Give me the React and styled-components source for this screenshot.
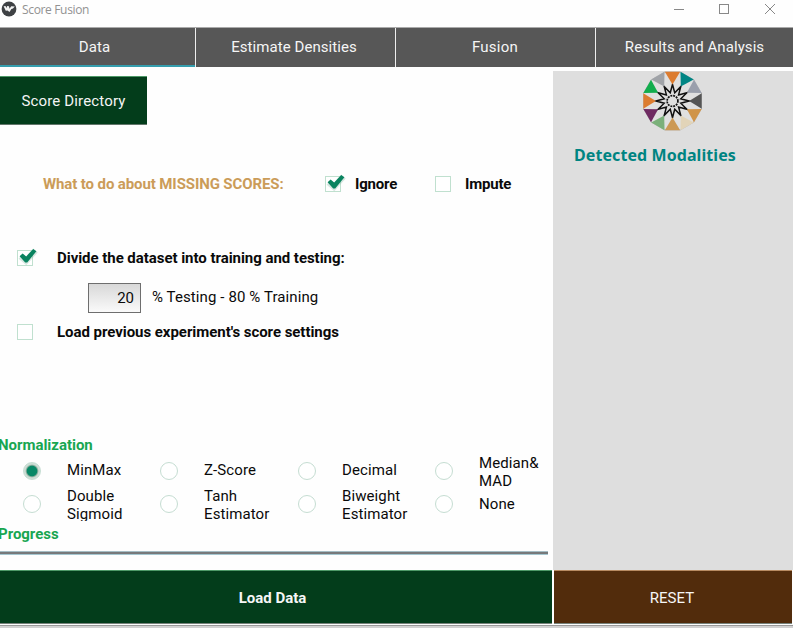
import React from "react";
import styled, { createGlobalStyle } from "styled-components";

const GlobalStyle = createGlobalStyle`
  * { box-sizing: border-box; }
  body {
    margin: 0;
    background: #fff;
    font-family: Roboto, sans-serif;
    font-size: 15px;
    line-height: 18px;
    color: #0a0a0a;
  }
`;

const Window = styled.div`
  width: 793px;
  height: 628px;
  overflow: hidden;
  display: flex;
  flex-direction: column;
  background: #fefefe;
`;

const TitleBar = styled.header`
  height: 27px;
  flex: none;
  display: flex;
  align-items: flex-start;
  justify-content: space-between;
`;

const AppTitle = styled.div`
  display: flex;
  gap: 5px;
  padding: 1px 0 0 1px;
  font: 12px/18px "Open Sans", sans-serif;
  letter-spacing: -0.34px;
  color: #929292;
`;

const WindowControls = styled.div`
  display: flex;
  gap: 35px;
  padding: 4px 18px 0 0;
`;

const Tabs = styled.nav`
  height: 40px;
  flex: none;
  display: grid;
  grid-template-columns: 195px 199px 199px 197px;
  column-gap: 1px;
  border-top: 1px solid #aaa;
  background: #eee;
`;

const Tab = styled.button`
  border: 0;
  padding: 0 ${(p) => p.$inset || 0}px 1px 0;
  background: #575757;
  box-shadow: ${(p) => (p.$active ? "inset 0 -2px #349dad" : "none")};
  color: #f5f5f5;
  font: 15px/18px Roboto, sans-serif;
  letter-spacing: ${(p) => p.$spacing || 0.07}px;
`;

const Body = styled.div`
  display: flex;
  height: 503px;
  flex: none;
`;

const Form = styled.main`
  width: 553px;
  flex: none;
  display: flex;
  flex-direction: column;
  align-items: flex-start;
`;

const DirectoryButton = styled.button`
  width: 147px;
  height: 49px;
  margin-top: 9px;
  padding: 0;
  border: 0;
  border-top: 1px solid #4d9967;
  border-bottom: 1px solid #62756a;
  background: #033d1b;
  color: #f4f4f4;
  font: 15px/18px Roboto, sans-serif;
  letter-spacing: 0.15px;
`;

const MissingRow = styled.div`
  display: grid;
  grid-template-columns: 282px 30px 80px 30px auto;
  align-items: center;
  height: 20px;
  margin: 49px 0 0 43px;
`;

const OptionRow = styled.div`
  display: grid;
  grid-template-columns: 40px auto;
  align-items: center;
  height: 20px;
  margin: ${(p) => p.$top}px 0 0 17px;
`;

const Label = styled.span`
  font-weight: 700;
  white-space: nowrap;
  color: ${(p) => p.$color || "#0a0a0a"};
  letter-spacing: ${(p) => p.$spacing || -0.045}px;
`;

const CheckIcon = styled.svg`
  display: block;
  width: 24px;
  height: 20px;
  overflow: visible;
`;

const SplitRow = styled.div`
  display: flex;
  gap: 11px;
  height: 30px;
  margin: 15px 0 0 88px;
  line-height: 28px;
`;

const PercentInput = styled.input`
  width: 53px;
  height: 30px;
  padding: 0 6px 0 0;
  border: 1px solid #6e6e6e;
  border-radius: 0;
  outline: 0;
  background: linear-gradient(#d8d8d8, #fafafa);
  text-align: right;
  color: #0a0a0a;
  font: 15px/28px Roboto, sans-serif;
`;

const SplitText = styled.span`
  letter-spacing: 0.1px;
`;

const SectionTitle = styled.h2`
  margin: ${(p) => p.$top}px 0 0 -2px;
  font-size: 15px;
  line-height: 18px;
  font-weight: 700;
  color: #18a651;
  letter-spacing: -0.03px;
`;

const Methods = styled.div`
  display: grid;
  grid-template-columns: 137px 138px 137px 118px;
  grid-template-rows: 33px 33px;
  height: 67px;
  margin: 0 0 0 23px;
`;

const Method = styled.label`
  display: grid;
  grid-template-columns: 44px auto;
  align-items: center;
  justify-content: start;
  letter-spacing: 0.1px;
  white-space: pre-line;
`;

const MethodName = styled.span`
  max-height: 34px;
  overflow: ${(p) => (p.$clipped ? "hidden" : "visible")};
  padding-bottom: ${(p) => (p.$raised ? 2 : 0)}px;
`;

const Radio = styled.input`
  appearance: none;
  width: 18px;
  height: 18px;
  margin: 0;
  border: 1px solid #c5ddd2;
  border-radius: 50%;
  background: #fff;

  &:checked {
    background: radial-gradient(circle, #078866 0 4.8px, #8daf9f 5.8px, #cfded6 6.8px);
  }
`;

const ProgressBar = styled.div`
  width: 548px;
  height: 4px;
  margin-top: 8px;
  border-top: 1px solid #a5bdc5;
  border-bottom: 1px solid #a5c7d1;
  background: #77797b;
`;

const Modalities = styled.aside`
  flex: 1;
  margin-top: 4px;
  background: #dedede;
`;

const Emblem = styled.svg`
  display: block;
  width: 60px;
  height: 60px;
  margin: 0 0 0 90px;
`;

const ModalitiesTitle = styled.h2`
  margin: 13px 0 0 21px;
  font: 700 16px/22px "Noto Sans", sans-serif;
  color: #008482;
  letter-spacing: 0.08px;
`;

const Actions = styled.footer`
  display: grid;
  grid-template-columns: 552px 238px;
  column-gap: 2px;
  height: 54px;
  flex: none;
`;

const ActionButton = styled.button`
  padding: 2px ${(p) => p.$inset || 0}px 0 0;
  border: 0;
  border-top: 1px solid ${(p) => p.$edge};
  border-bottom: 1px solid #77827b;
  background: ${(p) => p.$fill};
  color: #f6f6f6;
  font: ${(p) => (p.$bold ? 700 : 400)} 15px/18px Roboto, sans-serif;
`;

const BottomEdge = styled.div`
  height: 4px;
  flex: none;
  margin-top: 1px;
  border-top: 1px solid #999;
  background: #d2d2d2;
`;

function Checkbox({ checked }) {
  return (
    <CheckIcon viewBox="0 0 24 20">
      <rect x="0.5" y="2.5" width="15" height="15" fill="#fff" stroke="#c0e0cf" />
      {checked && (
        <>
          <path d="M3.5 8.5L9 13L18.5 2.5" fill="none" stroke="#7cae9b" strokeOpacity=".3" strokeWidth="6" />
          <path d="M2.6 8.2L5.6 5.4L9.2 8.4L16.2 1L19.4 3.2L10.2 14.4H8.2z" fill="#09835f" />
        </>
      )}
    </CheckIcon>
  );
}

const wedgeColors = [
  "#dc7c30", "#008584", "#9a9fac", "#555555", "#d09448", "#e2d4b8",
  "#cc9955", "#7bb07a", "#6f2b62", "#dc7c30", "#12ad4d", "#a0a3a8",
];

const polar = (radius, degrees) => {
  const a = ((degrees - 90) * Math.PI) / 180;
  return `${(radius * Math.cos(a)).toFixed(2)},${(radius * Math.sin(a)).toFixed(2)}`;
};

const ring = Array.from({ length: 24 }, (_, i) => polar(i % 2 ? 8.6 : 16.6, i * 15)).join(" ");
const outline = Array.from({ length: 12 }, (_, i) => polar(30, i * 30 + 15)).join(" ");

function ModalityEmblem() {
  return (
    <Emblem viewBox="-29.5 -30 60 60">
      <polygon points={outline} fill="#e0e0e0" stroke="#bdbdbd" strokeWidth="1" />
      <polygon points={ring} fill="#dedede" stroke="#101010" strokeWidth="1.5" />
      {wedgeColors.map((color, i) => (
        <polygon
          key={i}
          points={`${polar(30.2, i * 30 - 14.7)} ${polar(30.2, i * 30 + 14.7)} ${polar(16.6, i * 30)}`}
          fill={color}
        />
      ))}
      <circle r="5.4" fill="#dedede" stroke="#111" strokeWidth="1.7" strokeDasharray="1.9 .93" />
    </Emblem>
  );
}

const methods = [
  "MinMax", "Z-Score", "Decimal", "Median&\nMAD",
  "Double\nSigmoid", "Tanh\nEstimator", "Biweight\nEstimator", "None",
];

export default function App() {
  return (
    <>
      <GlobalStyle />
      <Window>
        <TitleBar>
          <AppTitle>
            <svg width="16" height="16" viewBox="0 0 16 16">
              <circle cx="8" cy="8" r="7.4" fill="#3e4144" />
              <path d="M2.6 5.3l2-.4.7 2.2.9-2.2 1.8.4.5 2.4 1.7-2.5 3.6.3-1.8 2-1.6.4-1.9 3.2-2-1.7-1.7.4z" fill="#f4f4f4" />
            </svg>
            Score Fusion
          </AppTitle>
          <WindowControls>
            <svg width="10" height="10" viewBox="1 0 10 10" overflow="visible"><path d="M0 5.5h10" stroke="#888" /></svg>
            <svg width="10" height="10" viewBox="1 0 10 10" overflow="visible"><rect x=".5" y=".5" width="9" height="9" fill="none" stroke="#888" /></svg>
            <svg width="10" height="10" viewBox="0 0 10 10"><path d="M0 0l10 10M10 0L0 10" stroke="#888" /></svg>
          </WindowControls>
        </TitleBar>
        <Tabs>
          <Tab $active $inset={6}>Data</Tab>
          <Tab $inset={3}>Estimate Densities</Tab>
          <Tab $inset={1} $spacing={0.25}>Fusion</Tab>
          <Tab>Results and Analysis</Tab>
        </Tabs>
        <Body>
          <Form>
            <DirectoryButton>Score Directory</DirectoryButton>
            <MissingRow>
              <Label $color="#cb9c59" $spacing={-0.11}>What to do about MISSING SCORES:</Label>
              <Checkbox checked />
              <Label $spacing={-0.2}>Ignore</Label>
              <Checkbox />
              <Label $spacing={-0.2}>Impute</Label>
            </MissingRow>
            <OptionRow $top={54}>
              <Checkbox checked />
              <Label>Divide the dataset into training and testing:</Label>
            </OptionRow>
            <SplitRow>
              <PercentInput defaultValue="20" />
              <SplitText>% Testing - 80 % Training</SplitText>
            </SplitRow>
            <OptionRow $top={9}>
              <Checkbox />
              <Label>Load previous experiment's score settings</Label>
            </OptionRow>
            <SectionTitle $top={94}>Normalization</SectionTitle>
            <Methods>
              {methods.map((name, i) => (
                <Method key={name}>
                  <Radio type="radio" name="method" defaultChecked={name === "MinMax"} />
                  <MethodName $raised={i < 4} $clipped={name === "Double\nSigmoid"}>{name}</MethodName>
                </Method>
              ))}
            </Methods>
            <SectionTitle $top={4}>Progress</SectionTitle>
            <ProgressBar />
          </Form>
          <Modalities>
            <ModalityEmblem />
            <ModalitiesTitle>Detected Modalities</ModalitiesTitle>
          </Modalities>
        </Body>
        <Actions>
          <ActionButton $bold $inset={7} $fill="#033d1b" $edge="#4d9967">Load Data</ActionButton>
          <ActionButton $inset={2} $fill="#522c0c" $edge="#b88b62">RESET</ActionButton>
        </Actions>
        <BottomEdge />
      </Window>
    </>
  );
}
